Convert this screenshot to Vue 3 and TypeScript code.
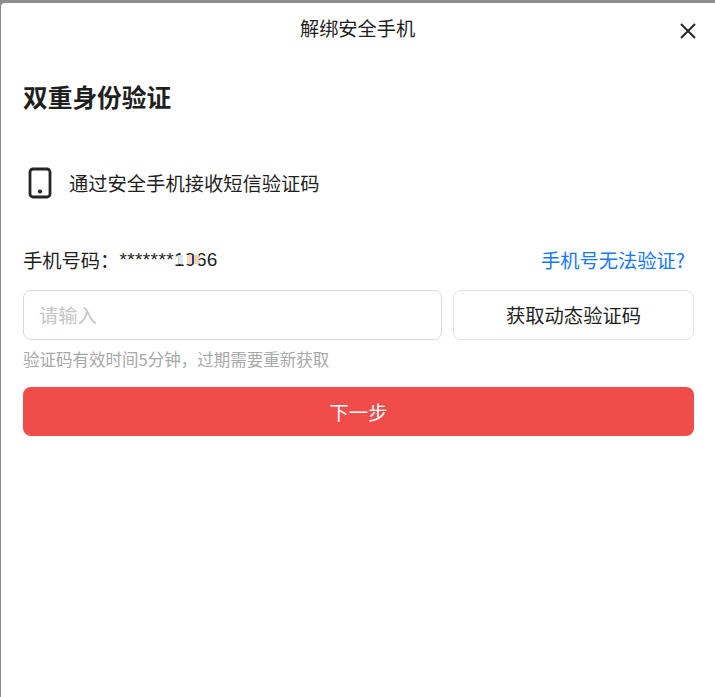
<script setup lang="ts">
const title = '解绑安全手机'
</script>

<template>
  <div class="page">
    <div class="modal">
      <header class="head">
        <span class="title">{{ title }}</span>
        <svg class="close" viewBox="0 0 16 16" width="16" height="16" aria-hidden="true">
          <path d="M1 1L15 15M15 1L1 15" stroke="#262626" stroke-width="2" fill="none" />
        </svg>
      </header>
      <h1 class="heading">双重身份验证</h1>
      <div class="method">
        <svg class="phone" viewBox="0 0 24 32" width="24" height="32" aria-hidden="true">
          <rect x="2" y="2" width="20" height="28" rx="3" stroke="#262626" stroke-width="2.8" fill="none" />
          <circle cx="12" cy="24.5" r="2.1" fill="#262626" />
        </svg>
        <span>通过安全手机接收短信验证码</span>
      </div>
      <div class="row">
        <div class="number">
          <span>手机号码：</span>
          <span class="digits">*******1966<i class="blot" /></span>
        </div>
        <a class="link">手机号无法验证?</a>
      </div>
      <div class="inputs">
        <div class="input">请输入</div>
        <button class="send" type="button">获取动态验证码</button>
      </div>
      <p class="hint">验证码有效时间5分钟，过期需要重新获取</p>
      <button class="next" type="button">下一步</button>
    </div>
  </div>
</template>

<style>
html, body { margin: 0; background: #8c8c8c; }
</style>

<style scoped>
.page {
  width: 715px;
  height: 697px;
  box-sizing: border-box;
  padding: 3px 0 0 1px;
  background: #8c8c8c;
  overflow: hidden;
  font-family: "Noto Sans CJK SC", "Liberation Sans", sans-serif;
  color: #1f1f1f;
}
.modal {
  height: 100%;
  box-sizing: border-box;
  background: #fff;
  border-radius: 4px 0 0 0;
  padding: 0 21px 0 22px;
}
.head {
  position: relative;
  height: 52px;
  display: flex;
  justify-content: flex-start;
  padding-top: 11px;
  padding-left: 277px;
  box-sizing: border-box;
  margin-right: -21px;
}
.title {
  font-size: 19.2px;
  line-height: 28px;
  font-weight: 400;
}
.close {
  position: absolute;
  top: 20px;
  right: 19px;
}
.heading {
  margin: 23px 0 0;
  font-size: 24.7px;
  line-height: 36px;
  font-weight: 700;
}
.method {
  display: flex;
  align-items: center;
  gap: 17px;
  margin-top: 53px;
  padding-left: 5px;
  font-size: 19.3px;
  line-height: 32px;
}
.row {
  display: flex;
  justify-content: space-between;
  align-items: center;
  margin-top: 47px;
  font-size: 19.3px;
  line-height: 28px;
  padding-right: 9px;
}
.number { display: flex; align-items: center; }
.digits {
  position: relative;
  font-family: "Liberation Sans", sans-serif;
  font-size: 19px;
  letter-spacing: 0.4px;
}
.blot {
  position: absolute;
  left: 60px;
  top: 9px;
  width: 25px;
  height: 9px;
  background: linear-gradient(90deg, #cfeafa 0 14%, #fff 14% 32%, #f8d9b8 32% 50%, #26408c 50% 62%, #f8d0a8 62% 82%, transparent 82%);
}
.link { color: #1677ff; }
.inputs {
  display: flex;
  gap: 11px;
  margin-top: 16px;
}
.input {
  width: 419px;
  height: 50px;
  box-sizing: border-box;
  border: 1px solid #d9d9d9;
  border-radius: 8px;
  padding-left: 15px;
  font-size: 19.3px;
  line-height: 48px;
  color: #c4c4c4;
}
.send {
  flex: 1;
  height: 50px;
  background: #fff;
  border: 1px solid #e2e2e2;
  border-radius: 8px;
  font: inherit;
  font-size: 19.3px;
  color: #1f1f1f;
  padding: 0;
}
.hint {
  margin: 7px 0 0;
  font-size: 16.5px;
  line-height: 24px;
  color: #a8a8a8;
}
.next {
  display: block;
  width: 100%;
  height: 49px;
  margin-top: 16px;
  background: #f04c49;
  border: none;
  border-radius: 8px;
  color: #fff;
  font: inherit;
  font-size: 19.3px;
  padding: 0;
}
</style>
